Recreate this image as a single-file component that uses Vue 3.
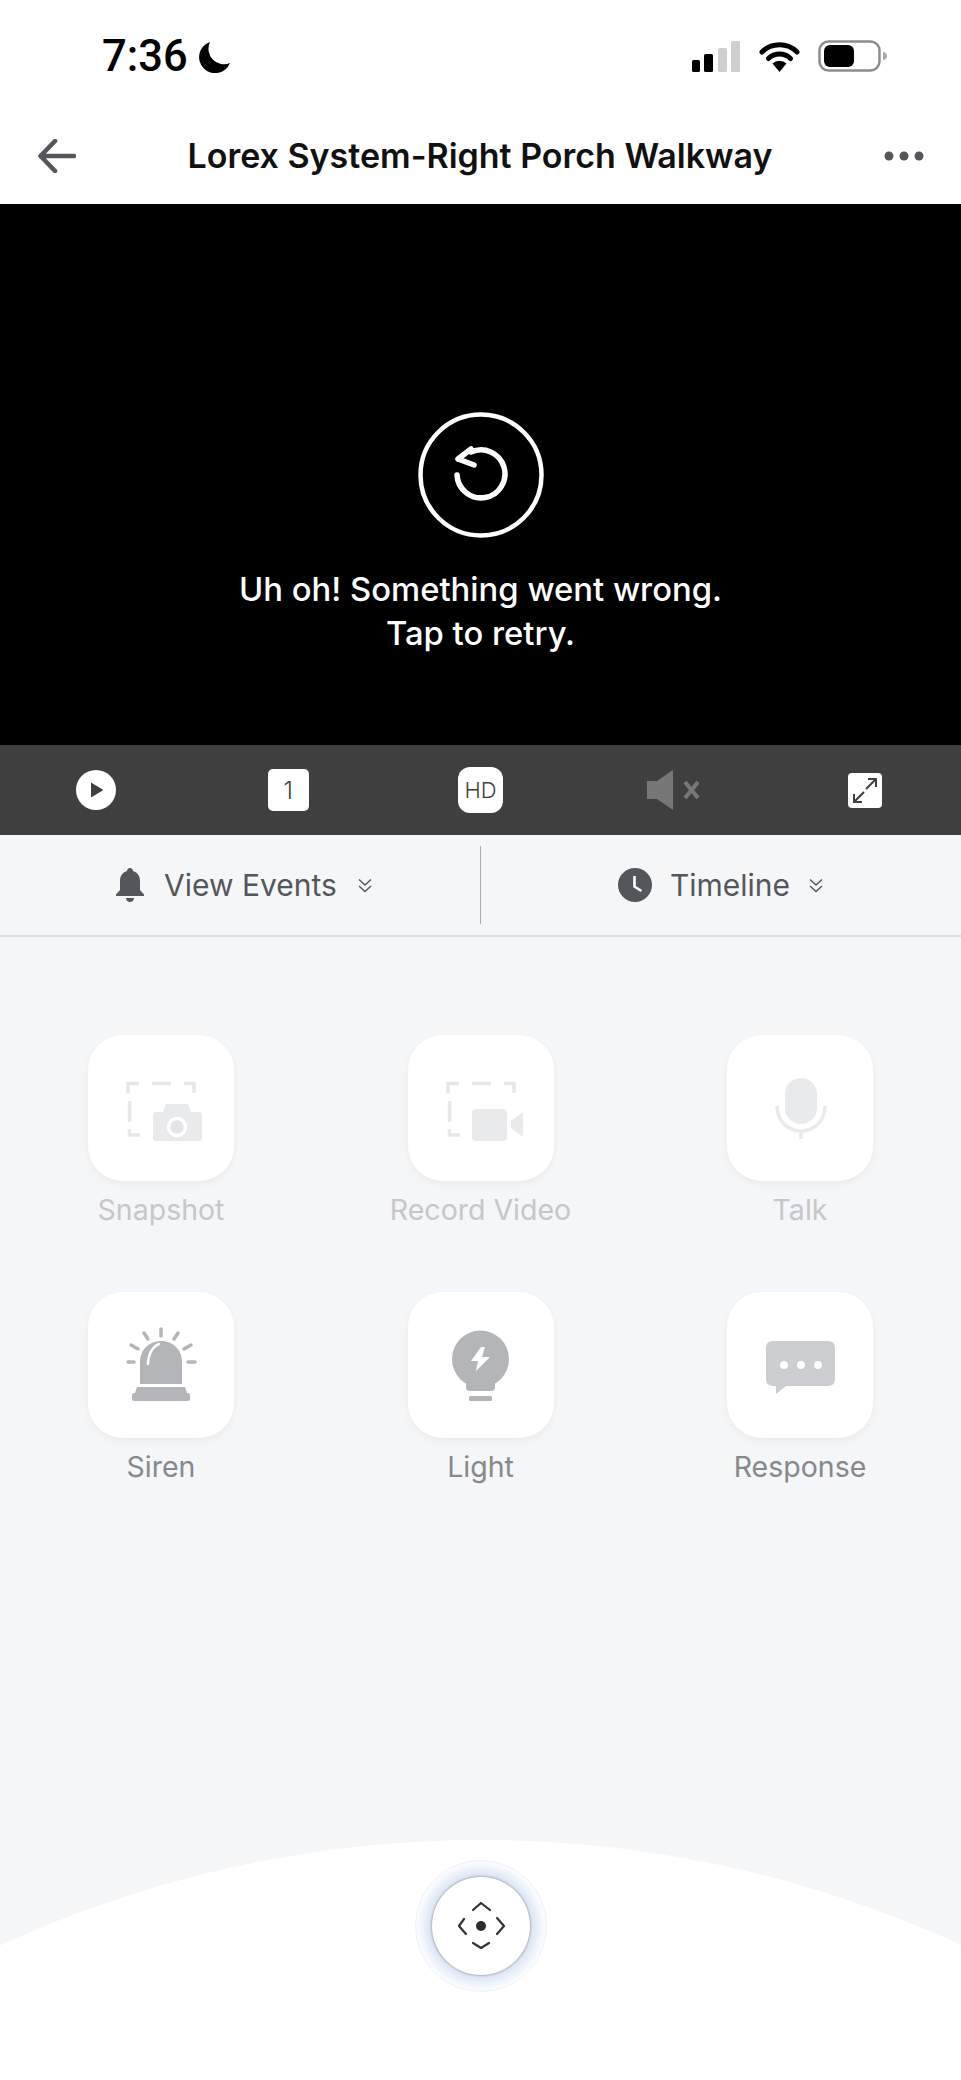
<template>
  <div class="screen">
    <div class="status-bar">
      <div class="clock">
        <span class="time">7:36</span>
        <svg class="moon" width="32" height="31" viewBox="0 0 32 31"><path d="M12 0A16 16 0 1 0 32 21A15.500 15.500 0 0 1 12 0Z" fill="#000"/></svg>
      </div>
      <div class="status-icons">
        <svg width="48" height="31" viewBox="0 0 48 31">
          <rect x="0" y="19" width="8" height="12" rx="1.500" fill="#000"/>
          <rect x="12" y="13" width="9" height="18" rx="1.500" fill="#000"/>
          <rect x="26" y="7" width="9" height="24" rx="1.500" fill="#cfcfcf"/>
          <rect x="39" y="0" width="9" height="31" rx="1.500" fill="#cfcfcf"/>
        </svg>
        <svg class="wifi" width="41" height="31" viewBox="0 0 41 31">
          <path d="M3 11A25 25 0 0 1 38 11M9.500 17.500A16 16 0 0 1 31.500 17.500" fill="none" stroke="#000" stroke-width="5" stroke-linecap="round"/>
          <path d="M20.500 31L13.500 22.500A10 10 0 0 1 27.500 22.500Z" fill="#000"/>
        </svg>
        <svg class="battery" width="70" height="32" viewBox="0 0 70 32">
          <rect x="1.500" y="1.500" width="60" height="29" rx="9" fill="none" stroke="#8d8d8d" stroke-width="2.500"/>
          <rect x="6" y="5" width="30" height="22" rx="6" fill="#000"/>
          <path d="M65 12C68 12.500 69 14 69 16C69 18 68 19.500 65 20Z" fill="#a9a9a9"/>
        </svg>
      </div>
    </div>

    <header class="top-bar">
      <svg class="back" width="38" height="34" viewBox="0 0 38 34"><path d="M36 17H3M17 2L2.500 17L17 32" fill="none" stroke="#55565c" stroke-width="4.600" stroke-linecap="round" stroke-linejoin="round"/></svg>
      <h1 class="title">Lorex System-Right Porch Walkway</h1>
      <svg class="more" width="40" height="10" viewBox="0 0 40 10">
        <circle cx="5" cy="5" r="4.500" fill="#55565c"/>
        <circle cx="20" cy="5" r="4.500" fill="#55565c"/>
        <circle cx="35" cy="5" r="4.500" fill="#55565c"/>
      </svg>
    </header>

    <section class="player">
      <svg width="128" height="128" viewBox="0 0 128 128">
        <circle cx="64" cy="64" r="60.500" fill="none" stroke="#fff" stroke-width="4.500"/>
        <path d="M40 64A24 24 0 1 0 54 41M41 48L54 38M41 48L57 54" fill="none" stroke="#fff" stroke-width="5.500" stroke-linecap="round" stroke-linejoin="round"/>
      </svg>
      <p class="error">Uh oh! Something went wrong.<br>Tap to retry.</p>
    </section>

    <div class="controls">
      <div class="control">
        <svg width="40" height="40" viewBox="0 0 40 40"><circle cx="20" cy="20" r="20" fill="#fff"/><path d="M15 12.500L27.500 20L15 27.500Z" fill="#3f3f3f"/></svg>
      </div>
      <div class="control"><span class="badge channel">1</span></div>
      <div class="control"><span class="badge hd">HD</span></div>
      <div class="control">
        <svg width="52" height="40" viewBox="0 0 52 40">
          <path d="M0 11H10L26 0V40L10 29H0Z" fill="#777"/>
          <path d="M38 12L51 28M51 12L38 28" stroke="#777" stroke-width="4"/>
        </svg>
      </div>
      <div class="control">
        <svg width="34" height="35" viewBox="0 0 34 35">
          <rect width="34" height="35" rx="4" fill="#fff"/>
          <path d="M18 16L28 6M20 6H28V14M16 19L6 29M6 21V29H14" fill="none" stroke="#3f3f3f" stroke-width="2"/>
        </svg>
      </div>
    </div>

    <nav class="tabs">
      <div class="tab events">
        <svg width="28" height="34" viewBox="0 0 28 34"><path d="M14 0C16 0 17 1.500 17 3C22 4.500 24 8.500 24 13V22L28 26.500V28H0V26.500L4 22V13C4 8.500 6 4.500 11 3C11 1.500 12 0 14 0Z" fill="#55565c"/><path d="M10 30H18C18 32.500 16 34 14 34C12 34 10 32.500 10 30Z" fill="#55565c"/></svg>
        <span class="tab-label">View Events</span>
        <svg class="chevrons" width="16" height="15" viewBox="0 0 16 15"><path d="M2 1.500L8 7L14 1.500M2 8L8 13.500L14 8" fill="none" stroke="#55565c" stroke-width="1.400"/></svg>
      </div>
      <div class="tab-divider"></div>
      <div class="tab">
        <svg width="34" height="34" viewBox="0 0 34 34"><circle cx="17" cy="17" r="17" fill="#55565c"/><path d="M16.500 8V18.500L23.500 23" fill="none" stroke="#fff" stroke-width="2.600"/></svg>
        <span class="tab-label">Timeline</span>
        <svg class="chevrons" width="16" height="15" viewBox="0 0 16 15"><path d="M2 1.500L8 7L14 1.500M2 8L8 13.500L14 8" fill="none" stroke="#55565c" stroke-width="1.400"/></svg>
      </div>
    </nav>

    <main class="actions">
      <div class="action disabled">
        <div class="tile">
          <svg width="146" height="146" viewBox="0 0 146 146">
            <path d="M40 58V48.500H51M64 48.500H83M96 48.500H106V58M41.500 66V87M41.500 94V100H52" fill="none" stroke="#e6e7e9" stroke-width="3.500"/>
            <path d="M65 80Q65 77 68 77H75L78 69H100L103 77H111Q114 77 114 80V103Q114 106 111 106H68Q65 106 65 103Z" fill="#e9eaec"/>
            <circle cx="89" cy="92" r="8.500" fill="#e3e4e6" stroke="#fff" stroke-width="3.500"/>
          </svg>
        </div>
        <span class="label">Snapshot</span>
      </div>
      <div class="action disabled">
        <div class="tile">
          <svg width="146" height="146" viewBox="0 0 146 146">
            <path d="M40 58V48.500H51M64 48.500H83M96 48.500H106V58M41.500 66V87M41.500 94V100H52" fill="none" stroke="#e6e7e9" stroke-width="3.500"/>
            <rect x="64" y="74" width="35" height="32" rx="4" fill="#e9eaec"/>
            <path d="M103 86L115 77V102L103 93Z" fill="#e9eaec"/>
          </svg>
        </div>
        <span class="label">Record Video</span>
      </div>
      <div class="action disabled">
        <div class="tile">
          <svg width="146" height="146" viewBox="0 0 146 146">
            <rect x="58" y="43" width="32" height="46" rx="16" fill="#e9eaec"/>
            <path d="M50 71C50 85 60 96 74 96C88 96 98 85 98 71M74 96V104" fill="none" stroke="#e9eaec" stroke-width="3.500"/>
          </svg>
        </div>
        <span class="label">Talk</span>
      </div>
      <div class="action">
        <div class="tile">
          <svg width="146" height="146" viewBox="0 0 146 146">
            <path d="M52 92V70C52 58 61 49 73 49C85 49 94 58 94 70V92Z" fill="#b3b5b9"/>
            <path d="M60 72C60 63 64 55 71 52" fill="none" stroke="#fff" stroke-width="2.500" stroke-linecap="round"/>
            <path d="M49 95H97L99 101H100Q102 101 102 104V107Q102 109 100 109H46Q44 109 44 107V104Q44 101 46 101H47Z" fill="#b3b5b9"/>
            <path d="M73 37V44M56 41L60 47M90 41L86 47M43 53L50 57M103 53L96 57M40 70H46M100 70H107" fill="none" stroke="#b3b5b9" stroke-width="3.500" stroke-linecap="round"/>
          </svg>
        </div>
        <span class="label">Siren</span>
      </div>
      <div class="action">
        <div class="tile">
          <svg width="146" height="146" viewBox="0 0 146 146">
            <circle cx="72.500" cy="67" r="28.500" fill="#b3b5b9"/>
            <path d="M58 88H87V95Q87 99 83 99H62Q58 99 58 95Z" fill="#b3b5b9"/>
            <rect x="61" y="104" width="23" height="5" rx="1.500" fill="#b3b5b9"/>
            <path d="M73 55L63 69H70L68 79L82 65H74L77 55Z" fill="#fff"/>
          </svg>
        </div>
        <span class="label">Light</span>
      </div>
      <div class="action">
        <div class="tile">
          <svg width="146" height="146" viewBox="0 0 146 146">
            <path d="M46 49H101Q108 49 108 56V87Q108 94 101 94H59L49 102V94H46Q39 94 39 87V56Q39 49 46 49Z" fill="#cbcdd0"/>
            <circle cx="57" cy="73" r="4" fill="#fff"/>
            <circle cx="74" cy="73" r="4" fill="#fff"/>
            <circle cx="91" cy="73" r="4" fill="#fff"/>
          </svg>
        </div>
        <span class="label">Response</span>
      </div>
    </main>

    <div class="ptz">
      <div class="arc"></div>
      <div class="joystick">
        <div class="stick">
          <svg width="60" height="60" viewBox="0 0 60 60">
            <path d="M22 14L30 7L39 14M22 47L30 52L38 47M13 23L8 30L15 38M46 22L53 30L46 38" fill="none" stroke="#333" stroke-width="2.200" stroke-linecap="round" stroke-linejoin="round"/>
            <circle cx="30" cy="30" r="5" fill="#2c2c2c"/>
          </svg>
        </div>
      </div>
    </div>
  </div>
</template>

<script setup>
</script>

<style>
body {
  background: #fff;
}
</style>

<style scoped>
.screen {
  width: 961px;
  height: 2080px;
  display: flex;
  flex-direction: column;
  overflow: hidden;
  background: #f4f6f8;
  font-family: Inter, "Liberation Sans", sans-serif;
}

.status-bar {
  height: 112px;
  box-sizing: border-box;
  background: #fff;
  display: flex;
  align-items: center;
  justify-content: space-between;
  padding: 0 73px 0 102px;
}
.clock {
  display: flex;
  align-items: center;
  gap: 10px;
}
.time {
  margin-top: 2px;
  font-family: Roboto, sans-serif;
  font-size: 43.500px;
  font-weight: 500;
  line-height: 1;
  color: #000;
}
.moon {
  margin-top: 2px;
}
.status-icons {
  display: flex;
  align-items: center;
  gap: 19px;
}
.wifi {
  margin-right: -1px;
}

.top-bar {
  height: 92px;
  box-sizing: border-box;
  background: #fff;
  display: flex;
  align-items: center;
  justify-content: space-between;
  padding: 0 37px 4px 38px;
}
.title {
  margin: 0;
  font-size: 34px;
  font-weight: 600;
  line-height: 40px;
  color: #111;
}

.player {
  height: 541px;
  box-sizing: border-box;
  background: #000;
  display: flex;
  flex-direction: column;
  align-items: center;
  padding-top: 207px;
}
.error {
  margin: 28px 0 0;
  font-size: 32.800px;
  font-weight: 500;
  line-height: 44px;
  text-align: center;
  color: #fff;
}

.controls {
  height: 90px;
  background: #3f3f3f;
  display: grid;
  grid-template-columns: repeat(5, 1fr);
}
.control {
  display: flex;
  align-items: center;
  justify-content: center;
}
.badge {
  display: flex;
  align-items: center;
  justify-content: center;
  background: #fff;
  color: #3f3f3f;
}
.channel {
  width: 41px;
  height: 42px;
  border-radius: 5px;
  font-size: 24px;
  font-weight: 300;
}
.hd {
  width: 45px;
  height: 46px;
  border-radius: 12px;
  font-size: 22px;
  font-weight: 300;
}

.tabs {
  height: 102px;
  box-sizing: border-box;
  display: grid;
  grid-template-columns: 1fr 1px 1fr;
  align-items: center;
  border-bottom: 2px solid #dcdde0;
}
.tab {
  box-sizing: border-box;
  display: flex;
  align-items: center;
  justify-content: center;
  gap: 18px;
}
.events {
  gap: 20px;
  padding-left: 9px;
}
.tab-label {
  font-size: 30px;
  line-height: 36px;
  color: #55565c;
}
.tab-divider {
  width: 1px;
  height: 78px;
  background: #a9abaf;
}

.actions {
  display: grid;
  grid-template-columns: repeat(3, 180px);
  justify-content: space-between;
  row-gap: 65px;
  padding: 98px 71px 0;
}
.action {
  display: flex;
  flex-direction: column;
  align-items: center;
}
.tile {
  width: 146px;
  height: 146px;
  background: #fff;
  border-radius: 35px;
  box-shadow: 0 3px 7px rgba(0, 0, 0, 0.05);
}
.label {
  margin-top: 12px;
  font-size: 28.500px;
  line-height: 34px;
  white-space: nowrap;
  color: #87888c;
}
.disabled .label {
  color: #c6c7ca;
}

.ptz {
  position: relative;
  margin-top: auto;
  height: 240px;
  overflow: hidden;
}
.arc {
  position: absolute;
  top: 0;
  left: 50%;
  width: 2300px;
  height: 2300px;
  margin-left: -1150px;
  border-radius: 50%;
  background: #fff;
}
.joystick {
  position: relative;
  width: 132px;
  height: 132px;
  margin: 20px auto 0;
  box-sizing: border-box;
  border: 1px solid #eff0f2;
  border-radius: 50%;
  background: radial-gradient(circle, #dbe5f6 0, #dbe5f6 50px, #fff 66px);
  display: flex;
  align-items: center;
  justify-content: center;
}
.stick {
  width: 98px;
  height: 98px;
  box-sizing: border-box;
  border-radius: 50%;
  background: #fff;
  box-shadow: 0 0 2px 1px #b0b3b8;
  display: flex;
  align-items: center;
  justify-content: center;
}
</style>
